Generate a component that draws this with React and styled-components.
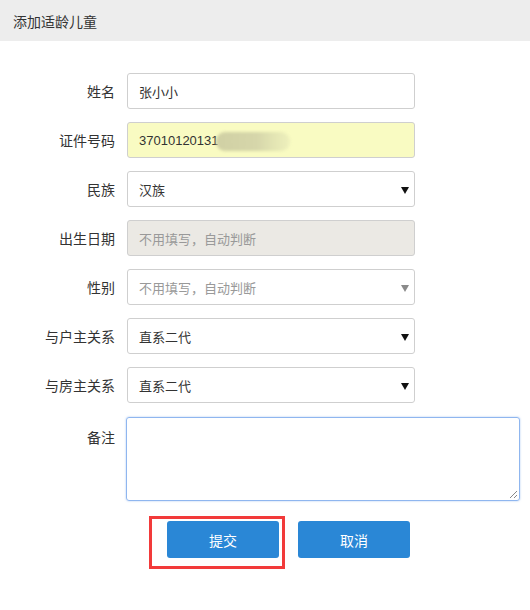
import React from 'react';
import styled, { createGlobalStyle, css } from 'styled-components';

const Global = createGlobalStyle`
  body {
    margin: 0;
    background: #fff;
    font-family: "Liberation Sans", "Noto Sans CJK SC", sans-serif;
    color: #333;
  }
`;

const Header = styled.div`
  height: 41px;
  background: #ededed;
  display: flex;
  align-items: center;
  padding-left: 13px;
  font-size: 14px;
  color: #333;
`;

const Form = styled.div`
  padding-top: 32px;
  display: flex;
  flex-direction: column;
  gap: 13px;
`;

const Row = styled.div`
  display: grid;
  grid-template-columns: 115px auto;
  column-gap: 12px;
  align-items: ${(p) => (p.$top ? 'start' : 'center')};
  margin-top: ${(p) => (p.$top ? '1px' : '0')};
`;

const Label = styled.label`
  text-align: right;
  font-size: 14px;
  color: #333;
  padding-top: ${(p) => (p.$top ? '10px' : '0')};
`;

const Field = styled.div`
  position: relative;
  box-sizing: border-box;
  width: 288px;
  height: 36px;
  border: 1px solid #cfcfcf;
  border-radius: 3px;
  padding-left: 11px;
  display: flex;
  align-items: center;
  font-size: 13px;
  color: ${(p) => (p.$muted ? '#999' : '#333')};
  background: ${(p) => p.$bg || '#fff'};
  overflow: hidden;
`;

const Arrow = styled.span`
  position: absolute;
  right: 5px;
  top: 15px;
  width: 0;
  height: 0;
  border-left: 4px solid transparent;
  border-right: 4px solid transparent;
  border-top: 7px solid ${(p) => (p.$muted ? '#8a8a8a' : '#111')};
`;

const Smudge = styled.span`
  position: absolute;
  left: 88px;
  top: 9px;
  width: 74px;
  height: 19px;
  border-radius: 9px;
  background: linear-gradient(90deg, #d0d0a4 0%, #d6d6aa 55%, #e4e6b4 80%, #eef0bc 100%);
  filter: blur(1.5px);
`;

const Textarea = styled.div`
  position: relative;
  box-sizing: border-box;
  width: 394px;
  height: 84px;
  border: 1px solid #8fb6ef;
  border-radius: 3px;
  box-shadow: 0 0 2px rgba(102, 153, 230, 0.6);
  margin-left: -1px;
`;

const Grip = styled.svg`
  position: absolute;
  right: 1px;
  bottom: 1px;
`;

const Buttons = styled.div`
  display: flex;
  align-items: flex-start;
  padding-left: 149px;
  margin-top: 2px;
`;

const Mark = styled.div`
  border: 3px solid #f23a3a;
  padding: 2px 3px 8px 15px;
`;

const Button = styled.button`
  width: 112px;
  height: 37px;
  border: none;
  border-radius: 3px;
  background: #2a87d6;
  color: #fff;
  font-size: 14px;
  font-family: inherit;
  ${(p) =>
    p.$spaced &&
    css`
      margin-left: 13px;
      margin-top: 5px;
    `}
`;

const fields = [
  { label: '姓名', value: '张小小' },
  { label: '证件号码', value: '37010120131', bg: '#f9fbc2', smudge: true },
  { label: '民族', value: '汉族', select: true },
  { label: '出生日期', value: '不用填写，自动判断', bg: '#ebe9e4', muted: true },
  { label: '性别', value: '不用填写，自动判断', select: true, muted: true },
  { label: '与户主关系', value: '直系二代', select: true },
  { label: '与房主关系', value: '直系二代', select: true },
];

export default function App() {
  return (
    <>
      <Global />
      <Header>添加适龄儿童</Header>
      <Form>
        {fields.map((f) => (
          <Row key={f.label}>
            <Label>{f.label}</Label>
            <Field $bg={f.bg} $muted={f.muted}>
              {f.value}
              {f.smudge && <Smudge />}
              {f.select && <Arrow $muted={f.muted} />}
            </Field>
          </Row>
        ))}
        <Row $top>
          <Label $top>备注</Label>
          <Textarea>
            <Grip width="10" height="10" viewBox="0 0 10 10">
              <path d="M9 2 L2 9 M9 6 L6 9" stroke="#888" strokeWidth="1" />
            </Grip>
          </Textarea>
        </Row>
        <Buttons>
          <Mark>
            <Button>提交</Button>
          </Mark>
          <Button $spaced>取消</Button>
        </Buttons>
      </Form>
    </>
  );
}
